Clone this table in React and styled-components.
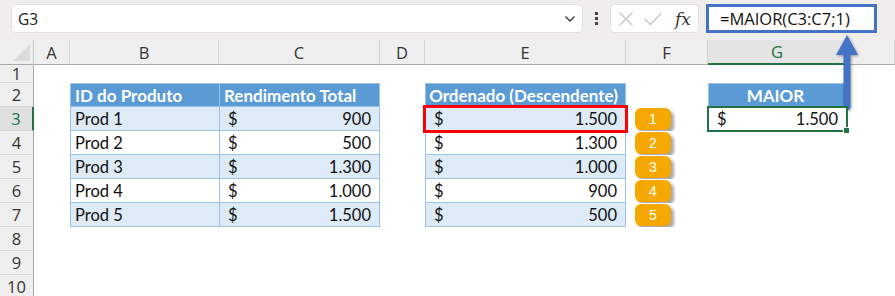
import React from 'react'
import styled, { createGlobalStyle } from 'styled-components'

const GlobalStyle = createGlobalStyle`
  body {
    margin: 0;
    background: #fff;
    font-family: 'Lato', 'Liberation Sans', sans-serif;
  }
`

const Page = styled.div`
  position: relative;
  width: 895px;
  height: 296px;
  overflow: hidden;
  background: #fff;
`

const Toolbar = styled.div`
  height: 40px;
  box-sizing: border-box;
  display: flex;
  align-items: flex-start;
  padding: 4px 0 0 11px;
  background: #f0eded;
`

const NameBox = styled.div`
  width: 572px;
  height: 29px;
  box-sizing: border-box;
  background: #fff;
  border: 1px solid #e2dfdf;
  border-radius: 5px;
  display: flex;
  align-items: center;
  justify-content: space-between;
  padding: 0 6px 0 6px;
  font-family: 'Open Sans', sans-serif;
  font-size: 15.5px;
  color: #222;
`

const Dots = styled.div`
  width: 27px;
  height: 29px;
  display: flex;
  flex-direction: column;
  align-items: center;
  justify-content: center;
  gap: 2px;
  & > span {
    width: 3px;
    height: 3px;
    background: #444;
  }
`

const FxBox = styled.div`
  width: 89px;
  height: 29px;
  box-sizing: border-box;
  background: #fff;
  border: 1px solid #e2dfdf;
  border-radius: 5px;
  display: flex;
  align-items: center;
  padding: 0 0 0 7px;
  gap: 10px;
`

const Fx = styled.span`
  font-family: 'DejaVu Serif', 'Liberation Serif', serif;
  font-style: italic;
  font-size: 17px;
  color: #333;
  margin-left: 3px;
`

const Formula = styled.div`
  width: 171px;
  height: 29px;
  margin: 0 0 0 7px;
  box-sizing: border-box;
  border: 3px solid #4472c4;
  background: #fff;
  display: flex;
  align-items: center;
  padding-left: 11px;
  font-family: 'Open Sans', sans-serif;
  font-size: 16.5px;
  color: #111;
`

const Sheet = styled.div`
  display: grid;
  grid-template-columns: 34px 36px 149px 161px 45px 201px 82px 139px 1fr;
  grid-template-rows: 25px 18px repeat(9, 24px);
`

const Corner = styled.div`
  position: relative;
  background: #efefef;
  border-right: 1px solid #c8c8c8;
  border-bottom: 1px solid #aaa;
  &::after {
    content: '';
    position: absolute;
    right: 3px;
    bottom: 3px;
    border-left: 17px solid transparent;
    border-bottom: 17px solid #dcdcdc;
  }
`

const ColHead = styled.div`
  background: ${p => (p.$active ? '#e4e4e4' : '#efefef')};
  border-right: 1px solid #d6d6d6;
  border-bottom: ${p => (p.$active ? '2px solid #217346' : '1px solid #aaa')};
  box-sizing: border-box;
  display: flex;
  align-items: center;
  justify-content: center;
  font-family: 'Open Sans', sans-serif;
  font-size: 16.5px;
  color: ${p => (p.$active ? '#217346' : '#333')};
`

const RowHead = styled.div`
  background: ${p => (p.$active ? '#e0e0e0' : '#efefef')};
  border-right: ${p => (p.$active ? '2px solid #217346' : '1px solid #aaa')};
  border-bottom: 1px solid #d6d6d6;
  box-sizing: border-box;
  display: flex;
  align-items: center;
  justify-content: center;
  font-family: 'Open Sans', sans-serif;
  font-size: 16.5px;
  color: ${p => (p.$active ? '#217346' : '#333')};
`

const Cell = styled.div`
  position: relative;
  box-sizing: border-box;
  display: flex;
  align-items: center;
  justify-content: ${p => p.$align || 'flex-start'};
  gap: 4px;
  padding: 0 8px 0 4px;
  font-size: ${p => (p.$head ? '17px' : '16.5px')};
  color: ${p => (p.$head ? '#fff' : '#111')};
  font-weight: ${p => (p.$head ? 700 : 400)};
  white-space: nowrap;
  background: ${p => (p.$head ? '#5b9bd5' : p.$band ? '#ddebf7' : '#fff')};
  border-left: ${p => (p.$table ? '1px solid #9bc2e6' : 'none')};
  border-top: ${p => (p.$table && p.$head ? '1px solid #9bc2e6' : 'none')};
  border-right: ${p => (p.$last ? '1px solid #9bc2e6' : 'none')};
  border-bottom: ${p => (p.$table ? '1px solid #9bc2e6' : 'none')};
  ${p => p.$red && `
    outline: 3px solid #ff0000;
    outline-offset: -1px;
    z-index: 1;
  `}
  ${p => p.$selected && `
    border: 2px solid #217346;
    margin: -1px;
    z-index: 1;
  `}
`

const Money = styled.div`
  flex: 1;
  display: flex;
  justify-content: space-between;
  padding-left: 4px;
`

const Handle = styled.span`
  position: absolute;
  right: -4px;
  bottom: -4px;
  width: 5px;
  height: 5px;
  background: #217346;
  border: 1px solid #fff;
`

const Badge = styled.div`
  width: 36px;
  height: 22px;
  margin-left: 9px;
  border-radius: 6px;
  background: #f5a900;
  box-shadow: 3px 3px 3px rgba(0, 0, 0, 0.35);
  display: flex;
  align-items: center;
  justify-content: center;
  font-family: 'Liberation Sans', sans-serif;
  font-size: 14px;
  color: #fff;
`

const Arrow = styled.svg`
  position: absolute;
  left: 830px;
  top: 30px;
  overflow: visible;
  filter: drop-shadow(1px 1px 1.5px rgba(0, 0, 0, 0.35));
`

const cols = ['A', 'B', 'C', 'D', 'E', 'F', 'G', '']
const products = ['Prod 1', 'Prod 2', 'Prod 3', 'Prod 4', 'Prod 5']
const totals = ['900', '500', '1.300', '1.000', '1.500']
const sorted = ['1.500', '1.300', '1.000', '900', '500']

const Dollar = ({ value }) => (
  <Money>
    <span>$</span>
    <span>{value}</span>
  </Money>
)

const Row = ({ r }) => {
  const i = r - 3
  const inBody = i >= 0 && i < 5
  const band = inBody && i % 2 === 0
  const isHead = r === 2
  const cells = []

  cells.push(<Cell key="A" />)

  if (isHead) {
    cells.push(<Cell key="B" $table $head>ID do Produto</Cell>)
    cells.push(<Cell key="C" $table $head $last>Rendimento Total</Cell>)
    cells.push(<Cell key="D" />)
    cells.push(<Cell key="E" $table $head $last $align="center">Ordenado (Descendente)</Cell>)
    cells.push(<Cell key="F" />)
    cells.push(<Cell key="G" $table $head $last $align="center">MAIOR</Cell>)
  } else if (inBody) {
    cells.push(<Cell key="B" $table $band={band}>{products[i]}</Cell>)
    cells.push(<Cell key="C" $table $last $band={band}><Dollar value={totals[i]} /></Cell>)
    cells.push(<Cell key="D" />)
    cells.push(<Cell key="E" $table $last $band={band} $red={i === 0}><Dollar value={sorted[i]} /></Cell>)
    cells.push(<Cell key="F" style={{ padding: 0 }}><Badge>{i + 1}</Badge></Cell>)
    if (i === 0) {
      cells.push(
        <Cell key="G" $selected>
          <Dollar value="1.500" />
          <Handle />
        </Cell>
      )
    } else {
      cells.push(<Cell key="G" />)
    }
  } else {
    ;['B', 'C', 'D', 'E', 'F', 'G'].forEach(k => cells.push(<Cell key={k} />))
  }
  cells.push(<Cell key="H" />)

  return (
    <>
      <RowHead $active={r === 3}>{r}</RowHead>
      {cells}
    </>
  )
}

export default function App() {
  const rows = [1, 2, 3, 4, 5, 6, 7, 8, 9, 10]
  return (
    <Page>
      <GlobalStyle />
      <Toolbar>
        <NameBox>
          <span>G3</span>
          <svg width="12" height="8" viewBox="0 0 12 8">
            <path d="M1.5 1.5 L6 6 L10.5 1.5" fill="none" stroke="#333" strokeWidth="1.3" />
          </svg>
        </NameBox>
        <Dots>
          <span />
          <span />
          <span />
        </Dots>
        <FxBox>
          <svg width="16" height="16" viewBox="0 0 16 16">
            <path d="M1.5 1.5 L14.5 14.5 M14.5 1.5 L1.5 14.5" stroke="#c4c4c4" strokeWidth="1.3" />
          </svg>
          <svg width="18" height="14" viewBox="0 0 18 14">
            <path d="M1 7 L6.5 12.5 L17 1.5" fill="none" stroke="#c4c4c4" strokeWidth="1.3" />
          </svg>
          <Fx>fx</Fx>
        </FxBox>
        <Formula>=MAIOR(C3:C7;1)</Formula>
      </Toolbar>
      <Sheet>
        <Corner />
        {cols.map((c, k) => (
          <ColHead key={k} $active={c === 'G'}>{c}</ColHead>
        ))}
        {rows.map(r => (
          <Row key={r} r={r} />
        ))}
      </Sheet>
      <Arrow width="34" height="85" viewBox="0 0 34 85">
        <path
          d="M17 5 L28 25 L20.5 25 L20.5 77 Q20.5 80 17 80 Q13.5 80 13.5 77 L13.5 25 L6 25 Z"
          fill="#4472c4"
        />
      </Arrow>
    </Page>
  )
}
